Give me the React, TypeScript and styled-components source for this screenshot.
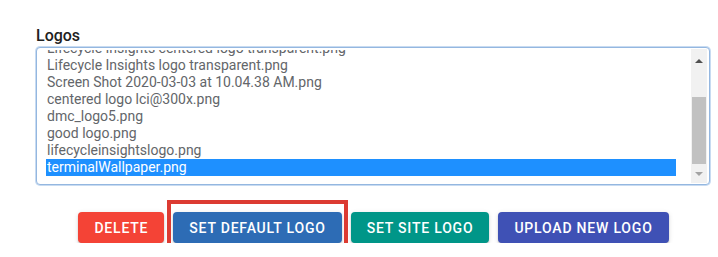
import * as React from 'react'
import styled, { createGlobalStyle } from 'styled-components'

const GlobalStyle = createGlobalStyle`
    html, body {
        margin: 0;
        padding: 0;
        background: #ffffff;
        font-family: Roboto, "Noto Sans", Arial, sans-serif;
    }
`

const files = [
    'Lifecycle Insights centered logo transparent.png',
    'Lifecycle Insights logo transparent.png',
    'Screen Shot 2020-03-03 at 10.04.38 AM.png',
    'centered logo lci@300x.png',
    'dmc_logo5.png',
    'good logo.png',
    'lifecycleinsightslogo.png',
    'terminalWallpaper.png'
]

const Page = styled.div`
    padding: 27px 0 0 36px;
    width: 674px;
`

const Label = styled.div`
    font-size: 16px;
    line-height: 18px;
    font-weight: 500;
    color: #212121;
    padding-left: 0;
    margin-bottom: 2px;
`

const ListBox = styled.div`
    display: flex;
    height: 136px;
    border: 1px solid #94b7e0;
    box-shadow: 0 0 0 1px #c8dbf1;
    border-radius: 4px;
    background: #fff;
    overflow: hidden;
`

const Viewport = styled.div`
    flex: 1;
    overflow: hidden;
    margin-top: 2px;
    padding: 0 15px 0 9px;
`

const Rows = styled.div<{ offset: number }>`
    margin-top: ${ (p) => -p.offset }px;
`

const Option = styled.div<{ selected?: boolean }>`
    height: 17px;
    line-height: 17px;
    font-size: 14px;
    padding-left: 1px;
    white-space: nowrap;
    color: ${ (p) => p.selected ? '#ffffff' : '#63666a' };
    background: ${ (p) => p.selected ? '#1e90ff' : 'transparent' };
`

const Scrollbar = styled.div`
    width: 16px;
    margin: 1px 2px 1px 0;
    display: flex;
    flex-direction: column;
    background: #f1f1f1;
`

const ArrowButton = styled.div<{ down?: boolean; disabled?: boolean }>`
    height: 17px;
    display: flex;
    align-items: center;
    justify-content: center;

    &::before {
        content: '';
        width: 0;
        height: 0;
        border-left: 4px solid transparent;
        border-right: 4px solid transparent;
        ${ (p) => p.down ? 'border-top' : 'border-bottom' }: 4px solid ${ (p) => p.disabled ? '#a3a3a3' : '#505050' };
        margin-top: ${ (p) => p.down ? '-2px' : '6px' };
    }
`

const Track = styled.div`
    flex: 1;
    display: flex;
    flex-direction: column;
    justify-content: flex-end;
    padding: 0 1px 2px;
`

const Thumb = styled.div`
    height: 67px;
    background: #c1c1c1;
`

const Actions = styled.div`
    display: flex;
    justify-content: center;
    gap: 9px;
    margin-top: 27px;
    padding-left: 1px;
`

const Button = styled.button<{ color: string }>`
    height: 31px;
    padding: 0 16px;
    border: none;
    border-radius: 4px;
    background: ${ (p) => p.color };
    color: #ffffff;
    font-family: Roboto, "Noto Sans", Arial, sans-serif;
    font-size: 14px;
    font-weight: 500;
    letter-spacing: 0.8px;
    text-transform: uppercase;
    cursor: pointer;
    box-shadow: 0 3px 1px -2px rgba(0,0,0,.2), 0 2px 2px 0 rgba(0,0,0,.14), 0 1px 5px 0 rgba(0,0,0,.12);
`

const Highlight = styled.div`
    position: relative;
    display: flex;

    &::after {
        content: '';
        position: absolute;
        top: -12px;
        bottom: -11px;
        left: -6px;
        right: -6px;
        border: 4px solid #dc3b32;
        pointer-events: none;
    }
`

export default function App() {
    const selected = 'terminalWallpaper.png'
    return (
        <Page>
            <GlobalStyle />
            <Label>Logos</Label>
            <ListBox>
                <Viewport>
                    <Rows offset={10}>
                        { files.map((f) => (
                            <Option key={f} selected={f === selected}>{f}</Option>
                        )) }
                    </Rows>
                </Viewport>
                <Scrollbar>
                    <ArrowButton />
                    <Track><Thumb /></Track>
                    <ArrowButton down disabled />
                </Scrollbar>
            </ListBox>
            <Actions>
                <Button color="#f44336">Delete</Button>
                <Highlight>
                    <Button color="#2d6cb5">Set Default Logo</Button>
                </Highlight>
                <Button color="#009688">Set Site Logo</Button>
                <Button color="#3f51b5">Upload New Logo</Button>
            </Actions>
        </Page>
    )
}
